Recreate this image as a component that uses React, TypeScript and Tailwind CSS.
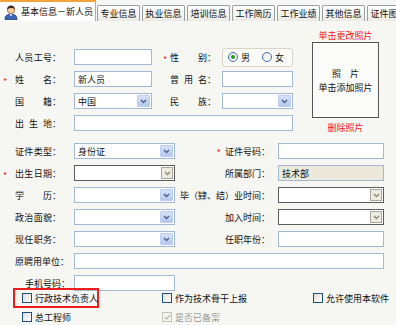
import React from "react"

const FONT = "font-['Noto_Sans_CJK_SC','Noto_Sans',sans-serif]"

function Star() {
  return <span className="text-[#e8141b] text-[9px] leading-none">*</span>
}

// label with characters spread over a fixed width, then the colon
function Label({ text, spread = true }: { text: string; spread?: boolean }) {
  return (
    <span className="flex items-center">
      {spread ? (
        <span className="flex w-[37px] justify-between">
          {text.split("").map((c, i) => (
            <span key={i}>{c}</span>
          ))}
        </span>
      ) : (
        <span>{text}</span>
      )}
      <span>：</span>
    </span>
  )
}

function LeftLabel({ text, star, spread = true, pad = "pl-[15px]" }: { text: string; star?: boolean; spread?: boolean; pad?: string }) {
  return (
    <div className={`relative flex w-[74px] shrink-0 items-center ${pad}`}>
      {star && (
        <span className="absolute left-[3px] top-[2px]">
          <Star />
        </span>
      )}
      <Label text={text} spread={spread} />
    </div>
  )
}

function TextBox({ w, value, bg = "bg-white" }: { w: string; value?: string; bg?: string }) {
  return (
    <div className={`flex h-[16px] shrink-0 items-center border border-[#a3b8d4] px-[3px] ${bg} ${w}`}>
      {value}
    </div>
  )
}

function Chevron({ color }: { color: string }) {
  return (
    <svg width="7" height="5" viewBox="0 0 7 5">
      <path d="M1 1 L3.5 3.5 L6 1" fill="none" stroke={color} strokeWidth="1.4" />
    </svg>
  )
}

function Select({ w, value }: { w: string; value?: string }) {
  return (
    <div className={`flex h-[16px] shrink-0 items-center justify-between border border-[#a3b8d4] bg-white pl-[3px] pr-[1px] ${w}`}>
      <span>{value}</span>
      <span className="flex h-[12px] w-[13px] items-center justify-center rounded-[1px] border border-[#bccdf0] bg-gradient-to-b from-[#d6e2f7] to-[#b4c9ef]">
        <Chevron color="#4a5f88" />
      </span>
    </div>
  )
}

function DateBox({ w }: { w: string }) {
  return (
    <div className={`flex h-[16px] shrink-0 items-center justify-end border border-[#5c5c5c] bg-white pr-[1px] ${w}`}>
      <span className="flex h-[12px] w-[12px] items-center justify-center border border-[#aaa79a] bg-[#eeebdf]">
        <Chevron color="#8c8a80" />
      </span>
    </div>
  )
}

function Check({ checked, disabled }: { checked?: boolean; disabled?: boolean }) {
  return (
    <span
      className={`flex h-[10px] w-[10px] shrink-0 items-center justify-center border ${
        disabled ? "border-[#c5c4bc] bg-[#f4f4f0]" : "border-[#1f4f7c] bg-gradient-to-br from-[#e0ded6] to-white"
      }`}
    >
      {checked && (
        <svg width="7" height="6" viewBox="0 0 7 6">
          <path d="M0.8 3 L2.8 5 L6.2 0.8" fill="none" stroke="#b8b7ae" strokeWidth="1.2" />
        </svg>
      )}
    </span>
  )
}

function Radio({ checked }: { checked?: boolean }) {
  return (
    <span className="flex h-[10px] w-[10px] items-center justify-center rounded-full border border-[#3d6fae] bg-gradient-to-br from-[#e6e6e0] to-white">
      {checked && <span className="h-[4px] w-[4px] rounded-full bg-[#21a121]" />}
    </span>
  )
}

function PersonIcon() {
  return (
    <svg width="16" height="16" viewBox="0 0 16 16">
      <path d="M2 15.5 C2 11.5 4.5 10 8 10 C11.5 10 14 11.5 14 15.5 Z" fill="#3b63b8" stroke="#1d3a78" strokeWidth="0.8" />
      <path d="M6.6 10.2 L8 12.6 L9.4 10.2 Z" fill="#ffffff" />
      <circle cx="8" cy="6" r="3.6" fill="#f5c99a" stroke="#8a5a2e" strokeWidth="0.7" />
      <path d="M4.2 5.6 C4.2 2.6 6 1.6 8 1.6 C10.2 1.6 11.8 2.8 11.8 5.4 C10.6 4.2 8.8 3.9 6.8 4.2 C5.8 4.4 5 4.9 4.2 5.6 Z" fill="#3a2a1a" />
    </svg>
  )
}

const tabs = ["专业信息", "执业信息", "培训信息", "工作简历", "工作业绩", "其他信息", "证件图片"]

export default function App() {
  return (
    <div className={`h-[325px] w-[396px] overflow-hidden bg-[#f6f6f3] text-[9px] leading-none text-[#111] ${FONT}`}>
      {/* tab strip */}
      <div className="flex h-[21px] items-end">
        <div className="flex h-[21px] w-[96px] shrink-0 items-center gap-[2px] border-r border-t-[2px] border-r-[#a8aea8] border-t-[#f2a43a] bg-white pl-[3px]">
          <PersonIcon />
          <span className="whitespace-nowrap">基本信息－新人员</span>
        </div>
        <div className="ml-[1px] flex gap-[2px]">
          {tabs.map((t) => (
            <div
              key={t}
              className="flex h-[16px] w-[43px] shrink-0 items-center justify-center overflow-hidden whitespace-nowrap rounded-t-[2px] border border-b-0 border-[#97a0a0] bg-gradient-to-b from-white to-[#ebeae4]"
            >
              {t}
            </div>
          ))}
        </div>
      </div>

      {/* top section */}
      <div className="flex">
        <div className="w-[300px] shrink-0 pt-[25px]">
          <div className="flex h-[22px] items-center">
            <LeftLabel text="人员工号" />
            <TextBox w="w-[78px]" />
            <div className="relative flex w-[70px] shrink-0 items-center pl-[18px]">
              <span className="absolute left-[11px] top-[2px]">
                <Star />
              </span>
              <Label text="性别" />
            </div>
            <div className="flex h-[19px] w-[71px] items-center gap-[3px] rounded-[3px] border border-[#d8d5c6] bg-[#fbfbf8] pl-[5px]">
              <Radio checked />
              <span>男</span>
              <span className="w-[6px]" />
              <Radio />
              <span>女</span>
            </div>
          </div>
          <div className="flex h-[22px] items-center">
            <LeftLabel text="姓名" star />
            <TextBox w="w-[78px]" value="新人员" />
            <div className="flex w-[70px] shrink-0 items-center pl-[18px]">
              <Label text="曾用名" />
            </div>
            <TextBox w="w-[71px]" />
          </div>
          <div className="flex h-[22px] items-center">
            <LeftLabel text="国籍" />
            <Select w="w-[78px]" value="中国" />
            <div className="flex w-[70px] shrink-0 items-center pl-[18px]">
              <Label text="民族" />
            </div>
            <Select w="w-[71px]" />
          </div>
          <div className="flex h-[22px] items-center">
            <LeftLabel text="出生地" />
            <TextBox w="w-[219px]" />
          </div>
        </div>

        <div className="ml-[12px] flex w-[67px] shrink-0 flex-col items-center">
          <div className="mt-[9px] h-[12px] whitespace-nowrap leading-[12px] text-[#f2141b]">单击更改照片</div>
          <div className="flex h-[76px] w-[67px] flex-col items-center justify-center gap-[3px] border border-[#555] bg-[#fbfbfa] leading-[11px]">
            <span>照　片</span>
            <span className="whitespace-nowrap">单击添加照片</span>
          </div>
          <div className="mt-[4px] h-[12px] leading-[12px] text-[#f2141b]">删除照片</div>
        </div>
      </div>

      {/* second section */}
      <div className="mt-[6px]">
        <div className="flex h-[22px] items-center">
          <LeftLabel text="证件类型" />
          <Select w="w-[101px]" value="身份证" />
          <div className="flex w-[103px] shrink-0 items-center justify-end pr-[8px]">
            <span className="mr-[4px] mt-[2px]">
              <Star />
            </span>
            证件号码：
          </div>
          <TextBox w="w-[106px]" />
        </div>
        <div className="flex h-[22px] items-center">
          <LeftLabel text="出生日期" star />
          <DateBox w="w-[101px]" />
          <div className="w-[103px] shrink-0 pr-[8px] text-right">所属部门：</div>
          <TextBox w="w-[106px]" value="技术部" bg="bg-[#ece9da]" />
        </div>
        <div className="flex h-[22px] items-center">
          <LeftLabel text="学历" />
          <Select w="w-[101px]" />
          <div className="w-[103px] shrink-0 whitespace-nowrap pr-[8px] text-right">毕（肄、结）业时间：</div>
          <DateBox w="w-[106px]" />
        </div>
        <div className="flex h-[22px] items-center">
          <LeftLabel text="政治面貌" />
          <Select w="w-[101px]" />
          <div className="w-[103px] shrink-0 pr-[8px] text-right">加入时间：</div>
          <DateBox w="w-[106px]" />
        </div>
        <div className="flex h-[22px] items-center">
          <LeftLabel text="现任职务" />
          <Select w="w-[101px]" />
          <div className="w-[103px] shrink-0 pr-[8px] text-right">任职年份：</div>
          <TextBox w="w-[106px]" />
        </div>
        <div className="flex h-[22px] items-center">
          <LeftLabel text="原聘用单位" spread={false} />
          <TextBox w="w-[310px]" />
        </div>
        <div className="mt-[3px] flex h-[16px] items-center">
          <LeftLabel text="手机号码" spread={false} pad="pl-[25px]" />
          <TextBox w="w-[101px]" />
        </div>

        {/* checkboxes */}
        <div className="-mt-[3px] flex h-[20px] items-center pl-[13px]">
          <div className="w-[149px] shrink-0">
            <div className="flex h-[20px] w-[86px] items-center gap-[3px] border-2 border-[#ee1c1c] pl-[7px]">
              <Check />
              <span className="whitespace-nowrap">行政技术负责人</span>
            </div>
          </div>
          <div className="flex w-[151px] shrink-0 items-center gap-[3px]">
            <Check />
            <span>作为技术骨干上报</span>
          </div>
          <div className="flex items-center gap-[3px]">
            <Check />
            <span>允许使用本软件</span>
          </div>
        </div>
        <div className="flex h-[18px] items-center pl-[22px]">
          <div className="flex w-[140px] shrink-0 items-center gap-[3px]">
            <Check />
            <span>总工程师</span>
          </div>
          <div className="flex items-center gap-[3px] text-[#9a9a94]">
            <Check checked disabled />
            <span>是否已备案</span>
          </div>
        </div>
      </div>
    </div>
  )
}
